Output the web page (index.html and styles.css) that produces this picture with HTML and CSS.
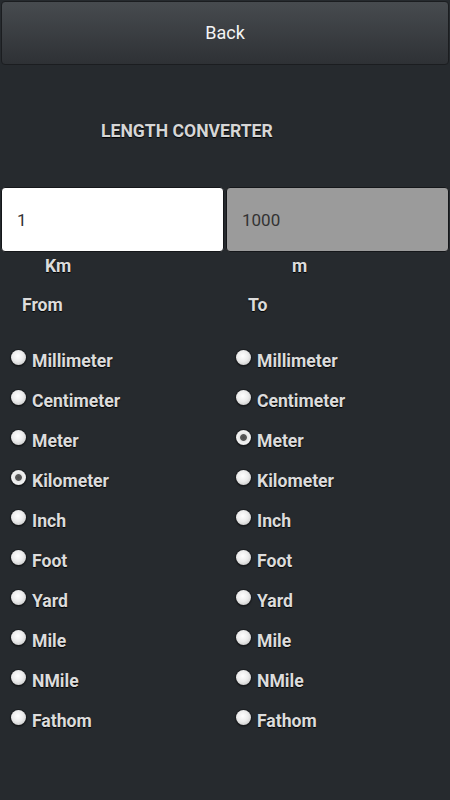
FILE: index.html
```html
<!DOCTYPE html>
<html>
<head>
<meta charset="utf-8">
<link rel="stylesheet" href="styles.css">
</head>
<body>
<div class="back">Back</div>
<div class="title">LENGTH CONVERTER</div>
<div class="inputs">
  <div class="field white">1</div>
  <div class="field gray">1000</div>
</div>
<div class="units">
  <div class="unit left">Km</div>
  <div class="unit right">m</div>
</div>
<div class="cols">
  <div class="col">
    <div class="head">From</div>
    <div class="list">
      <div class="row"><span class="radio"></span>Millimeter</div>
      <div class="row"><span class="radio"></span>Centimeter</div>
      <div class="row"><span class="radio"></span>Meter</div>
      <div class="row"><span class="radio on"></span>Kilometer</div>
      <div class="row"><span class="radio"></span>Inch</div>
      <div class="row"><span class="radio"></span>Foot</div>
      <div class="row"><span class="radio"></span>Yard</div>
      <div class="row"><span class="radio"></span>Mile</div>
      <div class="row"><span class="radio"></span>NMile</div>
      <div class="row"><span class="radio"></span>Fathom</div>
    </div>
  </div>
  <div class="col">
    <div class="head to">To</div>
    <div class="list">
      <div class="row"><span class="radio"></span>Millimeter</div>
      <div class="row"><span class="radio"></span>Centimeter</div>
      <div class="row"><span class="radio on"></span>Meter</div>
      <div class="row"><span class="radio"></span>Kilometer</div>
      <div class="row"><span class="radio"></span>Inch</div>
      <div class="row"><span class="radio"></span>Foot</div>
      <div class="row"><span class="radio"></span>Yard</div>
      <div class="row"><span class="radio"></span>Mile</div>
      <div class="row"><span class="radio"></span>NMile</div>
      <div class="row"><span class="radio"></span>Fathom</div>
    </div>
  </div>
</div>
</body>
</html>
```
FILE: styles.css
```css
html, body {
  margin: 0;
  padding: 0;
  background: #262a2e;
  font-family: Roboto, "Liberation Sans", sans-serif;
  color: #dcdcdc;
}
body {
  width: 450px;
  height: 800px;
  overflow: hidden;
}
.back {
  margin: 1px 1px 0 1px;
  height: 62px;
  border: 1px solid #1b1d20;
  border-radius: 4px;
  background: linear-gradient(#474b4f, #2e3135);
  display: flex;
  align-items: center;
  justify-content: center;
  color: #f4f4f4;
  font-size: 18px;
  line-height: 20px;
}
.title {
  margin-top: 56px;
  padding-left: 101px;
  font-size: 17.6px;
  line-height: 20px;
  font-weight: bold;
  color: #d6d6d6;
  text-shadow: 0 1px 1px #000;
}
.inputs {
  margin-top: 46px;
  display: flex;
  gap: 2px;
  padding: 0 1px;
}
.field {
  flex: 1;
  height: 63px;
  border: 1px solid #15171a;
  border-radius: 4px;
  display: flex;
  align-items: center;
  padding-left: 15px;
  font-size: 17px;
  color: #333;
}
.white { background: #ffffff; }
.gray { background: #9b9b9b; }
.units {
  margin-top: 4px;
  display: flex;
}
.unit {
  width: 225px;
  box-sizing: border-box;
  font-size: 17.6px;
  line-height: 20px;
  font-weight: bold;
  text-shadow: 0 1px 1px #000;
}
.unit.left { padding-left: 45px; }
.unit.right { padding-left: 67px; }
.cols {
  margin-top: 19px;
  display: flex;
}
.col {
  width: 225px;
}
.head {
  padding-left: 22px;
  font-size: 17.6px;
  line-height: 20px;
  font-weight: bold;
  text-shadow: 0 1px 1px #000;
}
.head.to { padding-left: 23px; }
.list {
  margin-top: 26px;
}
.row {
  height: 40px;
  box-sizing: border-box;
  padding: 10px 0 0 11px;
  display: flex;
  align-items: flex-start;
  font-size: 17.6px;
  line-height: 20px;
  font-weight: bold;
  color: #dcdcdc;
  text-shadow: 0 1px 1px #000;
}
.radio {
  width: 15px;
  height: 15px;
  margin-top: -1px;
  border-radius: 50%;
  margin-right: 6px;
  flex: none;
  box-sizing: border-box;
  background: radial-gradient(circle at 45% 40%, #ffffff 0%, #ececec 45%, #b9b9b9 100%);
  box-shadow: 0 0 0 1px #1c1e21, 0 1px 2px #000;
}
.radio.on {
  background: radial-gradient(circle, #4e4e4e 0%, #5a5a5a 28%, #e6e6e6 36%, #f2f2f2 60%, #bdbdbd 100%);
}
```
